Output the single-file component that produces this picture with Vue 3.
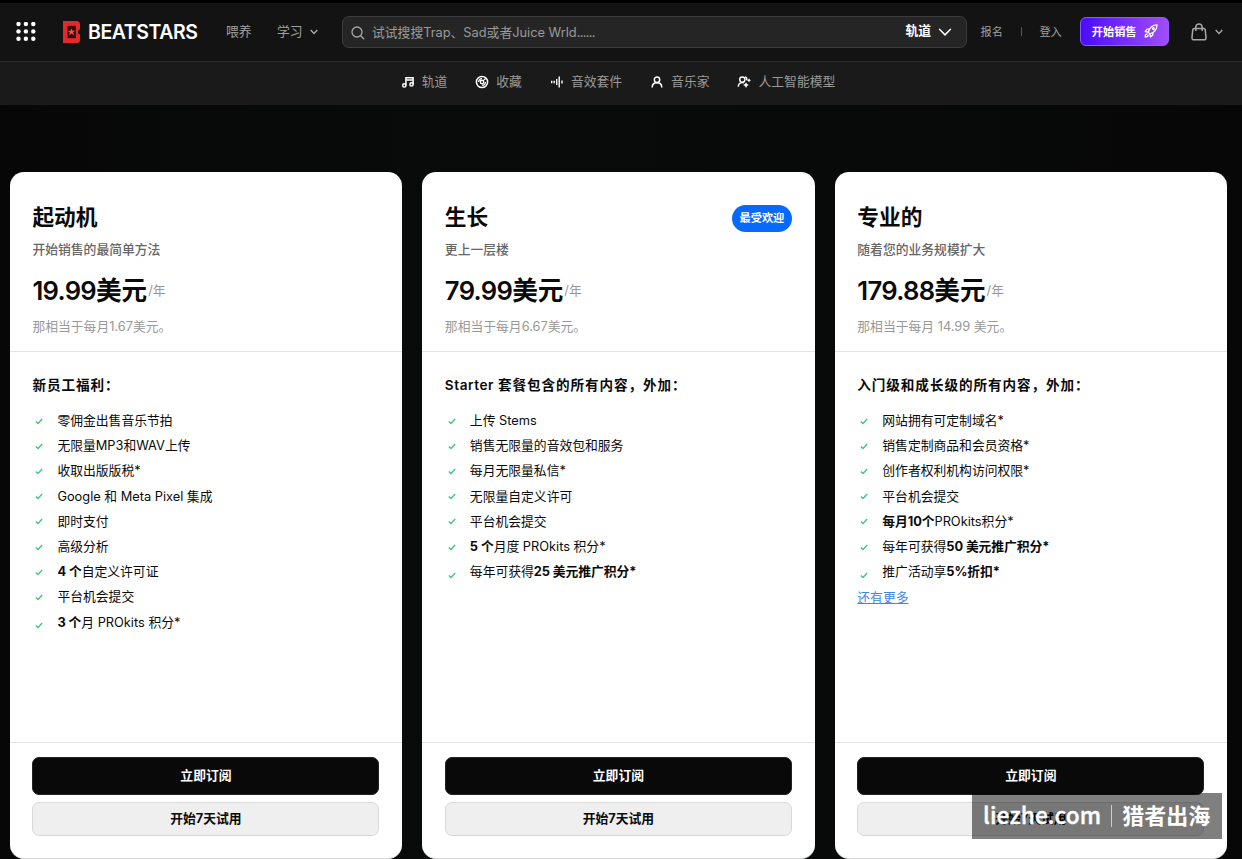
<script setup>
// Feature text is a list of [text, bold] runs.
const plans = [
  {
    title: '起动机',
    tagline: '开始销售的最简单方法',
    amount: '19.99',
    note: ['那相当于每月', '1.67', '美元。'],
    heading: ['', '新员工福利：'],
    features: [
      [['零佣金出售音乐节拍']],
      [['无限量MP3和WAV上传']],
      [['收取出版版税*']],
      [['Google 和 Meta Pixel 集成']],
      [['即时支付']],
      [['高级分析']],
      [['4 个', 1], ['自定义许可证']],
      [['平台机会提交']],
      [['3 个', 1], ['月 PROkits 积分*']],
    ],
  },
  {
    title: '生长',
    badge: '最受欢迎',
    tagline: '更上一层楼',
    amount: '79.99',
    note: ['那相当于每月', '6.67', '美元。'],
    heading: ['Starter ', '套餐包含的所有内容，外加：'],
    features: [
      [['上传 Stems']],
      [['销售无限量的音效包和服务']],
      [['每月无限量私信*']],
      [['无限量自定义许可']],
      [['平台机会提交']],
      [['5 个', 1], ['月度 PROkits 积分*']],
      [['每年可获得'], ['25 美元推广积分*', 1]],
    ],
  },
  {
    title: '专业的',
    tagline: '随着您的业务规模扩大',
    amount: '179.88',
    note: ['那相当于每月', ' 14.99 ', '美元。'],
    heading: ['', '入门级和成长级的所有内容，外加：'],
    features: [
      [['网站拥有可定制域名*']],
      [['销售定制商品和会员资格*']],
      [['创作者权利机构访问权限*']],
      [['平台机会提交']],
      [['每月10个', 1], ['PROkits积分*']],
      [['每年可获得'], ['50 美元推广积分*', 1]],
      [['推广活动享'], ['5%折扣*', 1]],
    ],
    more: '还有更多',
  },
]
</script>

<template>
  <div class="page">
    <header class="topbar">
      <svg class="apps" width="20" height="20" viewBox="0 0 20 20" fill="#fff">
        <template v-for="r in 3" :key="r">
          <circle v-for="c in 3" :key="c" :cx="c * 7.4 - 4.9" :cy="r * 7.4 - 5.4" r="2.2" />
        </template>
      </svg>
      <div class="logo">
        <svg width="17" height="22" viewBox="0 0 17 22">
          <path fill="#e5282c" d="M0 0h14.500Q17 .5 17 3v5.200L15 10v2.500l2 1V19q0 3-2.800 3H0z" />
          <path fill="#3c0708" d="M4.500 4.800h8.300v12.400H4.500z" />
          <path fill="#f0554d" d="m8.500 7.200.9 2.600 3-.2-2.400 1.700 1.200 2.900-2.700-1.600-2.300 1.800.7-2.900-2-1.600 2.700-.1z" />
        </svg>
        <span class="brand">BEATSTARS</span>
      </div>
      <a class="link feed">喂养</a>
      <a class="link learn">学习
        <svg width="8" height="6" viewBox="0 0 8 6" fill="none" stroke="#a8a8a8" stroke-width="1.4"><path d="m.7 1 3.300 3.400L7.300 1" /></svg>
      </a>
      <div class="search">
        <svg width="14" height="14" viewBox="0 0 14 14" fill="none" stroke="#a6a6a6" stroke-width="1.3" stroke-linecap="round"><circle cx="6" cy="6" r="5" /><path d="m9.700 9.700 3 3" /></svg>
        <span class="placeholder">试试搜搜Trap、Sad或者Juice Wrld<span class="dots">......</span></span>
        <span class="scope">轨道</span>
        <svg width="14" height="9" viewBox="0 0 14 9" fill="none" stroke="#fff" stroke-width="1.5" stroke-linecap="round" stroke-linejoin="round"><path d="m1.500 1.300 5.500 5.600 5.500-5.600" /></svg>
      </div>
      <a class="small signup">报名</a>
      <span class="bar"></span>
      <a class="small login">登入</a>
      <a class="sell">开始销售
        <svg width="14" height="14" viewBox="0 0 14 14" fill="none" stroke="#fff" stroke-width="1.300" stroke-linecap="round" stroke-linejoin="round">
          <path d="M4.200 8.200C5.500 4 8.200 1 13 .9c0 4.700-2.800 7.500-7 8.900z" />
          <path d="M5.200 5.200H3L1.100 7.600l3 .6M8.800 8.800V11l-2.400 1.900-.5-3M3 9.800c-1.400.2-1.800 1.600-1.900 3.100 1.500 0 2.900-.4 3.100-1.800" />
          <circle cx="9.400" cy="4.600" r=".9" />
        </svg>
      </a>
      <svg class="bag" width="16" height="18" viewBox="0 0 16 18" fill="none" stroke="#a8a8a8" stroke-width="1.500" stroke-linejoin="round">
        <path d="M3 5.600h10q1 0 1.200 1L15 14.300q.2 2.500-2 2.500H3q-2.200 0-2-2.500l.8-7.700q.2-1 1.200-1zM4.800 8V4.200q.2-3.200 3.200-3.200t3.200 3.200V8" />
      </svg>
      <svg class="bagcaret" width="8" height="6" viewBox="0 0 8 6" fill="none" stroke="#a8a8a8" stroke-width="1.400"><path d="m.7 1 3.300 3.400L7.300 1" /></svg>
    </header>

    <nav class="subnav">
      <a class="tab">
        <svg width="14" height="14" viewBox="0 0 14 14" fill="none" stroke="#fff" stroke-width="1.500"><circle cx="3.300" cy="10.400" r="1.600" /><circle cx="10.500" cy="9.400" r="1.600" /><path d="M4.900 10.400V2.700h7.200v6.700M4.900 4.900h7.200" /></svg>轨道
      </a>
      <a class="tab">
        <svg width="14" height="14" viewBox="0 0 14 14" fill="none" stroke="#fff"><circle cx="7" cy="7" r="5.600" stroke-width="1.500" /><circle cx="7" cy="7" r="1.700" stroke-width="1.400" /><path stroke-width="1.300" d="M3.600 7A3.400 3.400 0 0 1 7 3.600M10.400 7A3.400 3.400 0 0 1 7 10.400M9 5l1.800-1.800" /></svg>收藏
      </a>
      <a class="tab">
        <svg width="14" height="14" viewBox="0 0 14 14" fill="none" stroke="#fff" stroke-width="1.400"><path d="M1.700 5.800v2.400M4.200 5.800v2.400M6.700 4v6M9.200 1.500v11M12 5.500v3" /></svg>音效套件
      </a>
      <a class="tab">
        <svg width="14" height="14" viewBox="0 0 14 14" fill="none" stroke="#fff" stroke-width="1.500"><circle cx="7" cy="4.800" r="2.700" /><path d="M2.200 12.500C2.200 9.200 4.200 7.800 7 7.800s4.800 1.400 4.800 4.700" /></svg>音乐家
      </a>
      <a class="tab">
        <svg width="14" height="14" viewBox="0 0 14 14" fill="none" stroke="#fff" stroke-width="1.400"><circle cx="5.300" cy="4.600" r="2.600" /><path d="M1.300 11.800c0-2.700 1.500-4.200 4-4.200.8 0 1.500.1 2 .4M8 1.900q2.300.6 1.700 3.500" /><path fill="#fff" stroke="none" d="m9 7.200 1 1.900 1.900 1-1.900 1-1 1.900-1-1.900-1.900-1 1.900-1zM12 3.200l.7 1.400 1.300.7-1.300.7-.7 1.400-.7-1.400-1.300-.7 1.300-.7z" /></svg>人工智能模型
      </a>
    </nav>

    <main class="plans">
      <section v-for="p in plans" :key="p.title" class="card">
        <div class="intro">
          <div class="titlerow">
            <h2>{{ p.title }}</h2>
            <span v-if="p.badge" class="badge">{{ p.badge }}</span>
          </div>
          <p class="tagline">{{ p.tagline }}</p>
          <p class="price"><b class="num">{{ p.amount }}</b><b>美元</b><span>/年</span></p>
          <p class="note">{{ p.note[0] }}<span>{{ p.note[1] }}</span>{{ p.note[2] }}</p>
        </div>
        <div class="details">
          <h3><span class="lead">{{ p.heading[0] }}</span>{{ p.heading[1] }}</h3>
          <ul>
            <li v-for="(f, i) in p.features" :key="i">
              <svg width="8" height="7" viewBox="0 0 8 7" fill="none" stroke="#42c582" stroke-width="1.400"><path d="m.8 3.400 2.200 2L7.200 1" /></svg>
              <span class="ftext"><span v-for="(run, j) in f" :key="j" :class="{ bold: run[1] }">{{ run[0] }}</span></span>
            </li>
          </ul>
          <a v-if="p.more" class="more">{{ p.more }}</a>
        </div>
        <div class="actions">
          <button class="buy">立即订阅</button>
          <button class="trial">开始7天试用</button>
        </div>
      </section>
    </main>

    <div class="watermark"><span class="site">liezhe.com</span><span class="rule"></span><span>猎者出海</span></div>
  </div>
</template>

<style>
body { background: #080909; overflow: hidden; }
</style>

<style scoped>
* { box-sizing: border-box; }
.page {
  width: 1242px; height: 859px; overflow: hidden; position: relative;
  display: flex; flex-direction: column;
  border-top: 3px solid #000;
  background: linear-gradient(90deg, #070707, #090b0b 40%, #070707);
  font-family: Inter, "Noto Sans CJK SC", sans-serif; font-size: 12.8px; color: #0a0a0a;
}
h2, h3, p, ul { margin: 0; padding: 0; }
svg { flex: none; display: block; }

.topbar { height: 59px; flex: none; display: flex; align-items: center; background: #131313; border-bottom: 1px solid #2a2a2a; padding-left: 16px; }
.logo { display: flex; align-items: center; gap: 8px; margin-left: 27px; width: 136px; }
.brand { color: #fff; font-size: 19.500px; font-weight: 600; line-height: 22px; letter-spacing: -0.450px; }
.link { color: #a0a0a0; line-height: 20px; }
.feed { margin-left: 27px; width: 51px; }
.learn { display: flex; align-items: center; gap: 7px; width: 65px; }
.search { width: 625px; height: 32px; flex: none; display: flex; align-items: center; border: 1px solid #3b3b3b; border-radius: 7px; background: #252525; padding: 0 14px 0 8px; color: #9b9b9b; }
.search > svg:first-child { margin: 1px 7px 0 0; }
.placeholder { flex: 1; line-height: 20px; padding-top: 2px; white-space: nowrap; }
.dots { letter-spacing: -0.650px; }
.scope { color: #fff; font-weight: 700; margin-right: 7px; line-height: 18px; padding-bottom: 2px; }
.small { font-size: 11.200px; color: #a0a0a0; line-height: 18px; }
.signup { margin-left: 13.500px; }
.bar { width: 1px; height: 9px; background: #5a5a5a; margin: 0 17.500px 2px 18px; }
.sell { margin-left: 18px; width: 89px; height: 29px; flex: none; display: flex; align-items: center; gap: 7px; padding: 0 0 1px 11px; margin-bottom: 1px; border: 1px solid #8c5cff; border-radius: 6px; background: linear-gradient(90deg, #4a0cff, #a24dfb); color: #fff; font-size: 11.200px; font-weight: 700; white-space: nowrap; }
.bag { margin-left: 22px; }
.bagcaret { margin-left: 8px; }

.subnav { height: 43px; flex: none; display: flex; align-items: center; justify-content: center; gap: 28px; background: #1a1a1a; padding: 0 6px 3px 0; }
.tab { display: flex; align-items: center; gap: 7px; color: #999; line-height: 20px; }

.plans { margin-top: 67px; padding: 0 15px 0 10px; height: 687px; flex: none; display: grid; grid-template-columns: repeat(3, 1fr); gap: 20.400px; }
.card { display: flex; flex-direction: column; background: #fff; border-radius: 14px; border-bottom: 1px solid #ddd; overflow: hidden; min-width: 0; }
.intro { height: 180px; flex: none; padding: 29px 22.600px 0 22.400px; border-bottom: 1px solid #e4e4e4; }
.titlerow { height: 32px; display: flex; align-items: center; justify-content: space-between; }
h2 { font-size: 21.700px; line-height: 32px; font-weight: 700; }
.badge { background: #0869ff; color: #fff; font-size: 11.200px; font-weight: 700; line-height: 26px; height: 27px; width: 60px; margin-top: 2px; text-align: center; border-radius: 14px; white-space: nowrap; }
.tagline { color: #666; font-weight: 500; line-height: 20px; margin-top: 7px; }
.price { display: flex; align-items: center; height: 36px; margin-top: 13px; }
.price b { font-size: 25.600px; line-height: 36px; font-weight: 700; }
.price .num { font-weight: 600; letter-spacing: -0.700px; }
.price span { color: #999; margin: 0 0 3px 1px; }
.note { color: #999; line-height: 20px; margin-top: 8px; white-space: pre; }
.details { flex: 1; padding: 23px 22.400px 0; }
h3 { font-size: 13.600px; line-height: 20px; font-weight: 600; letter-spacing: 0.920px; white-space: pre; }
.lead { letter-spacing: 0.550px; }
ul { list-style: none; margin-top: 13.500px; }
li { height: 25.200px; display: flex; align-items: center; padding-left: 3px; }
li svg { margin-right: 14px; }
li:last-child svg { position: relative; top: 3px; }
.ftext { white-space: pre; line-height: 20px; }
.bold { font-weight: 700; letter-spacing: -0.080px; }
.more { display: block; color: #3f88e8; text-decoration: underline; line-height: 25px; }
.actions { height: 116px; flex: none; border-top: 1px solid #e4e4e4; padding: 14px 22.600px 0 22.400px; display: flex; flex-direction: column; gap: 7px; }
button { font: 700 12.800px Inter, "Noto Sans CJK SC", sans-serif; border-radius: 7px; padding: 0 0 4px; }
.buy { height: 38px; background: #090909; color: #fff; border: 1px solid #222; }
.trial { height: 34px; background: #efefef; color: #0a0a0a; border: 1px solid #d9d9d9; }

.watermark { position: absolute; left: 972px; top: 790px; width: 250px; height: 46px; display: flex; align-items: center; padding: 0 0 4px 11px; background: rgba(0, 0, 0, 0.5); color: #fff; font: 700 22px "Noto Sans CJK SC", sans-serif; white-space: nowrap; }
.site { font-size: 22.600px; font-weight: 500; letter-spacing: 0.150px; -webkit-text-stroke: 0.400px #fff; }
.rule { width: 1px; height: 22px; background: #ccc; margin: 3px 10px 0; }
</style>
